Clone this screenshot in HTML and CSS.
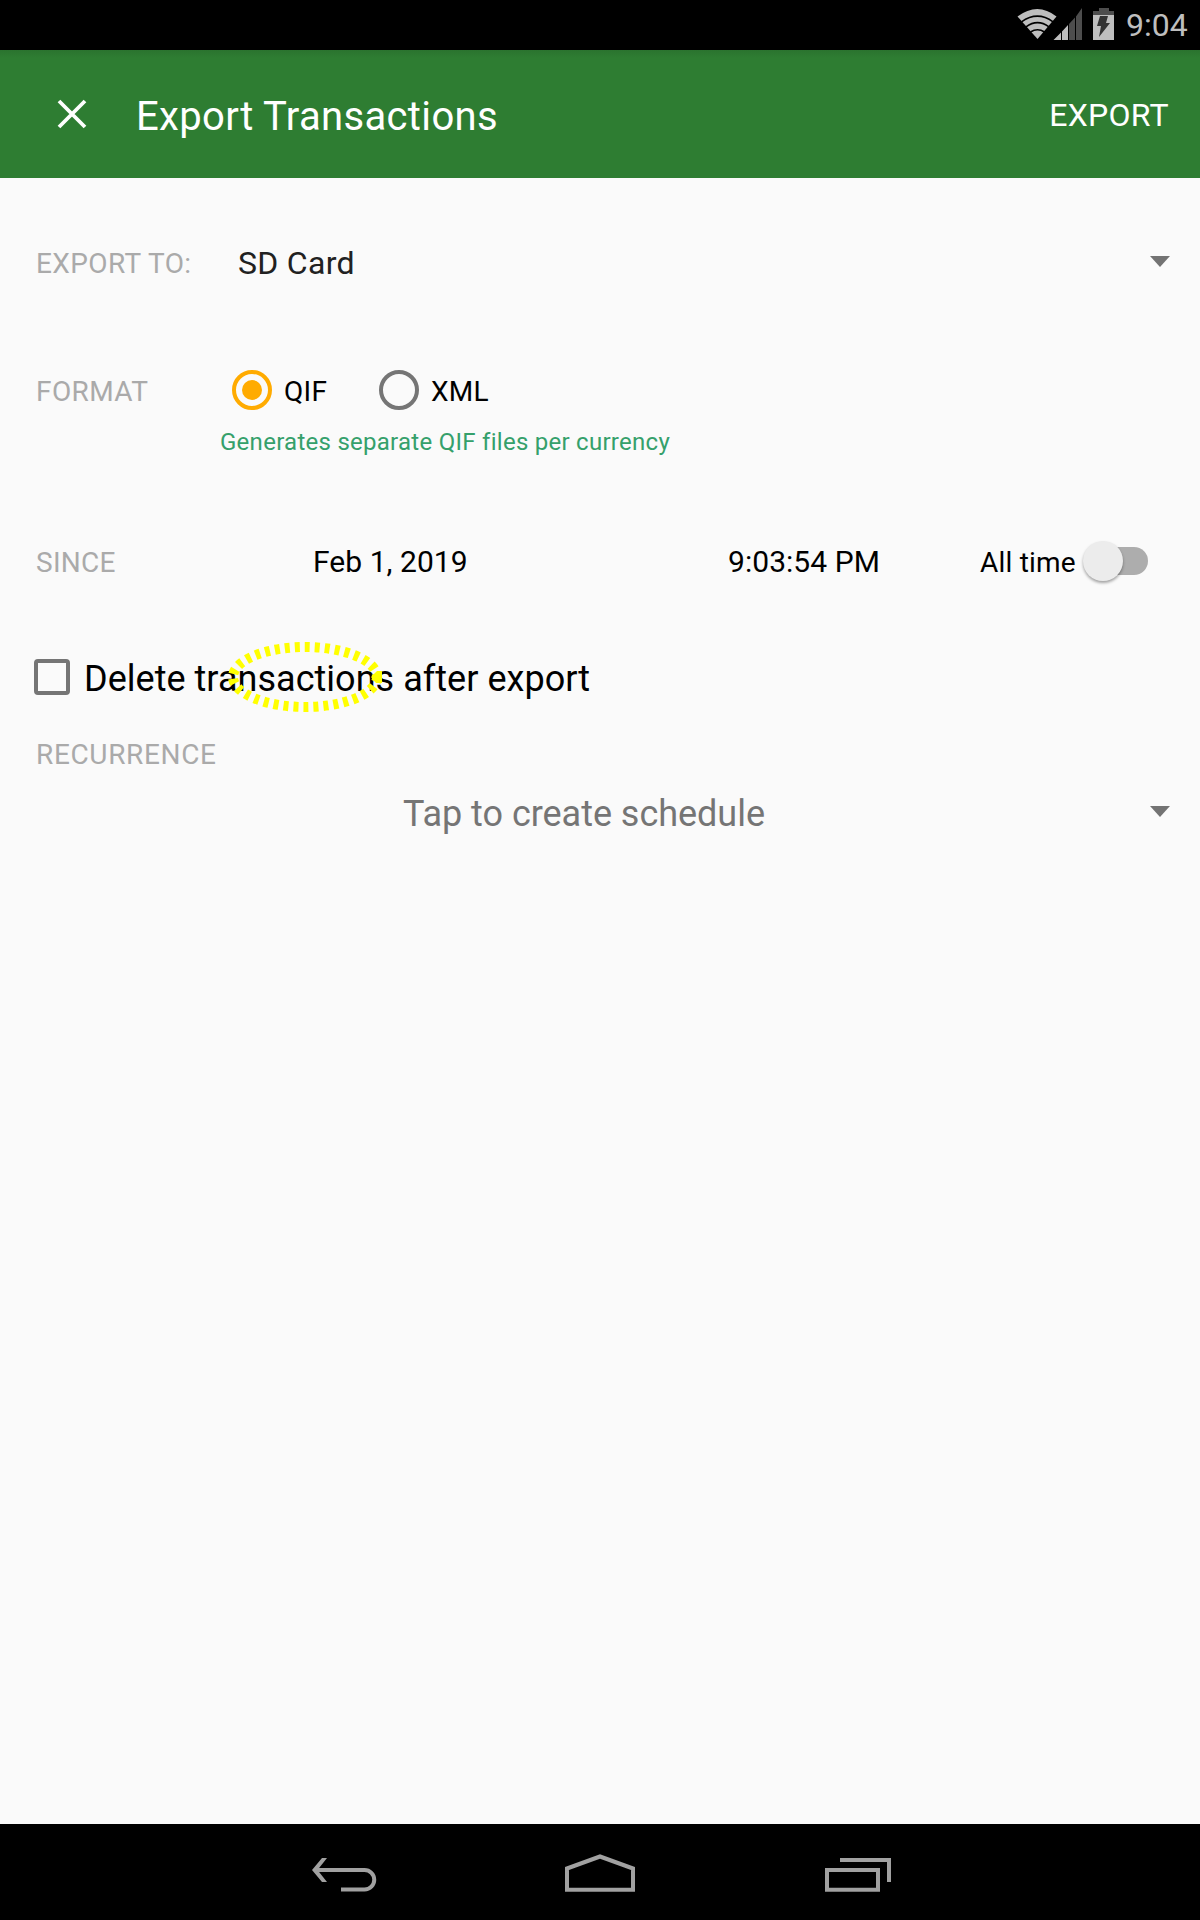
FILE: index.html
```html
<!DOCTYPE html>
<html lang="en">
<head>
<meta charset="utf-8">
<title>Export Transactions</title>
<link rel="stylesheet" href="styles.css">
</head>
<body>
<div class="screen">
  <div class="status">
    <svg class="status-icons" width="98" height="34" viewBox="0 0 98 34">
      <g fill="none" stroke="#bebebe">
        <path d="M0.500 10.500Q20.500-4.500 39.500 10.500L20.500 33Z" fill="#bebebe" stroke="none"/>
        <path d="M4.500 15.800Q20.500 4.500 36 15.800M9 20.800Q20.500 12.500 32 20.800M13.500 26Q20.500 21.500 27.500 26" stroke="#000" stroke-width="1.600"/>
      </g>
      <path d="M36.500 34L44 26.500V34ZM45 25.500L51 19V34H45Z" fill="#bebebe"/>
      <path d="M52 18L58 11.500V34H52ZM59 10.500L65 2V34H59Z" fill="#4d4d4d"/>
      <path d="M76 5h6V2h10v3h5v4H76Z" fill="#4d4d4d"/>
      <path d="M76 9h21v25H76Z" fill="#bebebe"/>
      <path d="M83 10h8l-2 7h4L82 31l2-11h-4Z" fill="#333"/>
    </svg>
    <span class="clock">9:04</span>
  </div>
  <header class="appbar">
    <svg class="close" width="30" height="30" viewBox="0 0 30 30"><path d="M2 2L28 28M28 2L2 28" stroke="#fff" stroke-width="3.800"/></svg>
    <h1 class="title">Export Transactions</h1>
    <span class="action">EXPORT</span>
  </header>
  <main class="form">
    <div class="row row-target">
      <span class="label label-wide">EXPORT TO:</span>
      <span class="target">SD Card</span>
      <svg class="arrow" width="20" height="11" viewBox="0 0 20 11"><path d="M0 0H20L10 11Z" fill="#737373"/></svg>
    </div>
    <div class="row row-format">
      <span class="label label-format">FORMAT</span>
      <svg class="radio" width="40" height="40" viewBox="0 0 40 40"><circle cx="20" cy="20" r="18" fill="none" stroke="#ffab00" stroke-width="4"/><circle cx="20" cy="20" r="10" fill="#ffab00"/></svg>
      <span class="option option-qif">QIF</span>
      <svg class="radio" width="40" height="40" viewBox="0 0 40 40"><circle cx="20" cy="20" r="18" fill="none" stroke="#757575" stroke-width="4"/></svg>
      <span class="option option-xml">XML</span>
    </div>
    <p class="hint"><span class="hint-text">Generates separate QIF files per currency</span></p>
    <div class="row row-since">
      <span class="label label-since">SINCE</span>
      <span class="date">Feb 1, 2019</span>
      <span class="time">9:03:54 PM</span>
      <span class="alltime">All time</span>
      <span class="switch"><span class="thumb"></span></span>
    </div>
    <div class="row row-delete">
      <span class="checkbox"></span>
      <span class="delete">Delete transactions after export</span>
      <svg class="highlight" width="160" height="74" viewBox="0 0 160 74"><path d="M152 37A72 30 0 0 1 8 37A72 30 0 0 1 152 37" fill="none" stroke="#ff0" stroke-width="10" stroke-dasharray="5 5"/><path d="M146 37L152 31H157V43H151Z" fill="#ff0"/></svg>
    </div>
    <div class="row row-recurrence"><span class="label label-recurrence">RECURRENCE</span></div>
    <div class="row row-schedule">
      <span class="schedule">Tap to create schedule</span>
      <svg class="arrow" width="20" height="11" viewBox="0 0 20 11"><path d="M0 0H20L10 11Z" fill="#737373"/></svg>
    </div>
  </main>
  <nav class="navbar">
    <svg width="66" height="34" viewBox="0 0 66 34"><path d="M4 12H53.500a9.700 9.700 0 0 1 0 19.500H30" fill="none" stroke="#a1a1a1" stroke-width="4"/><path d="M1 12L11 0H16L6.500 12L16 24H11Z" fill="#a1a1a1"/></svg>
    <svg class="home" width="70" height="38" viewBox="0 0 70 38"><path d="M2 14.500L35 2.500L68 14.500V35.800H2Z" fill="none" stroke="#a1a1a1" stroke-width="4"/></svg>
    <svg width="66" height="34" viewBox="0 0 66 34"><path d="M2 12H53V31.800H2ZM15 2H64V24" fill="none" stroke="#a1a1a1" stroke-width="4"/></svg>
  </nav>
</div>
</body>
</html>
```
FILE: styles.css
```css
* { box-sizing: border-box; }
body { margin: 0; font-family: Roboto, sans-serif; color: #000; background: #fafafa; }
.screen { width: 1200px; height: 1920px; display: flex; flex-direction: column; }
svg { display: block; flex: none; }
span, h1 { white-space: nowrap; }
.status { height: 50px; background: #000; display: flex; justify-content: flex-end; align-items: flex-start; padding: 6px 10px 0 0; }
.status-icons { margin-right: 11px; }
.clock { width: 64px; color: #bebebe; font-size: 32px; line-height: 39px; }
.appbar { height: 128px; background: linear-gradient(#2a732e, #2e7d32 8px); color: #fff; display: flex; align-items: center; padding: 0 31px 0 57px; }
.title { margin: 5px 0 0 49px; font-size: 40px; font-weight: 400; line-height: 48px; letter-spacing: .35px; }
.action { margin-left: auto; font-size: 32px; line-height: 40px; margin-top: 1px; letter-spacing: .3px; }
.form { flex: 1; padding-top: 45px; }
.row { display: flex; align-items: center; padding-left: 36px; height: 60px; position: relative; }
.label { font-size: 28px; color: #aaa; letter-spacing: .4px; }
.row-target { height: 80px; padding-right: 30px; }
.label-wide { width: 202px; }
.target { font-size: 32px; color: #212121; letter-spacing: .3px; }
.arrow { margin: 0 0 4px auto; }
.row-format { margin-top: 58px; }
.label-format { width: 196px; }
.radio { margin-bottom: 2px; }
.option { font-size: 28px; padding-left: 12px; letter-spacing: .3px; }
.option-qif { width: 107px; }
.hint { margin: 0; padding-left: 220px; height: 42px; line-height: 42px; font-size: 24px; color: #35a06b; letter-spacing: .27px; }
.row-since { margin-top: 69px; }
.label-since { width: 277px; letter-spacing: .25px; }
.date { width: 415px; font-size: 30px; margin-bottom: 2px; letter-spacing: .05px; }
.time { width: 252px; font-size: 30px; margin-bottom: 2px; letter-spacing: .05px; }
.alltime { width: 106px; font-size: 28px; letter-spacing: .2px; }
.switch { width: 62px; height: 28px; border-radius: 14px; background: #adadad; display: flex; align-items: center; margin-bottom: 2px; }
.thumb { width: 40px; height: 40px; flex: none; border-radius: 50%; background: #ececec; margin-left: -3px; box-shadow: 0 2px 3px rgba(0,0,0,.35); }
.row-delete { margin-top: 56px; padding-left: 34px; }
.checkbox { width: 36px; height: 36px; border: 4px solid #757575; border-radius: 4px; margin-bottom: 2px; }
.delete { margin: 2px 0 0 14px; font-size: 36px; letter-spacing: .03px; }
.highlight { position: absolute; left: 225px; top: -8px; }
.row-recurrence { margin-top: 30px; height: 32px; }
.label-recurrence { letter-spacing: .65px; }
.row-schedule { margin-top: 13px; padding: 0 30px 0 403px; }
.schedule { font-size: 36px; color: #757575; margin-top: 2px; letter-spacing: -.03px; }
.navbar { height: 96px; background: #000; display: flex; align-items: flex-end; padding: 0 0 28px 311px; }
.home { margin: 0 190px 0 188px; }
```
